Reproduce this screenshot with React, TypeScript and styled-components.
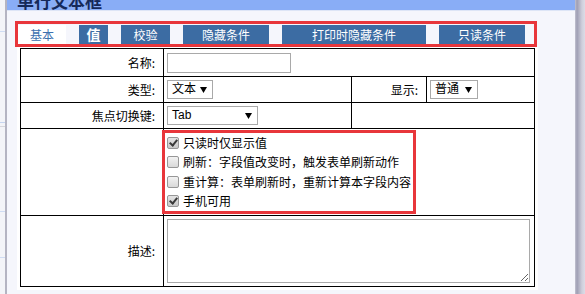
import React from "react";
import styled, { createGlobalStyle } from "styled-components";

const Global = createGlobalStyle`
  html, body {
    margin: 0;
    padding: 0;
    width: 585px;
    height: 294px;
    overflow: hidden;
    background: #f3f4f8;
  }
  body {
    font-family: "Liberation Sans", "Noto Sans CJK SC", sans-serif;
    font-size: 12px;
    color: #000;
  }
`;

const Screen = styled.div`
  display: flex;
  width: 585px;
  height: 294px;
  overflow: hidden;
`;

const Backdrop = styled.div`
  flex: none;
  width: 5px;
  background: linear-gradient(
    to bottom,
    #f3f4f8 0 31px,
    #cfdcf3 31px 32px,
    #f3f4f8 32px 122px,
    #c6d5f0 122px 123px,
    #f3f4f8 123px 126px,
    #d6d6dc 126px 127px,
    #f3f4f8 127px 211px,
    #cfdcf3 211px 212px,
    #f3f4f8 212px 257px,
    #cfdcf3 257px 258px,
    #f3f4f8 258px
  );
`;

const Dialog = styled.div`
  flex: none;
  width: 570px;
  box-sizing: border-box;
  border-left: 2px solid #b4b4c2;
  background: #f5f6fc;
  display: flex;
  flex-direction: column;
`;

const RightEdge = styled.div`
  flex: none;
  width: 10px;
  background: linear-gradient(
    90deg,
    #c2c2d0 0,
    #9e9eb4 2px,
    #a8a8bc 3px,
    #bcbccc 5px,
    #cfcfdc 7px,
    #dcdce6 10px
  );
`;

const TitleBar = styled.div`
  flex: none;
  height: 10px;
  overflow: hidden;
  background: #89adf6;
  border-bottom: 1px solid #dde5f6;
  padding-left: 10px;
`;

const Title = styled.div`
  margin-top: -8px;
  font-family: "Noto Sans CJK SC", sans-serif;
  font-size: 17px;
  line-height: 17px;
  font-weight: bold;
  color: #15295a;
`;

const Body = styled.div`
  padding: 10px 0 0 8px;
  display: flex;
  flex-direction: column;
`;

const TabBar = styled.div`
  box-sizing: border-box;
  width: 522px;
  height: 26px;
  border: 3px solid #e8363b;
  padding-top: 1px;
  display: flex;
  gap: 13px;
`;

const Tab = styled.div<{ $w: number; $active?: boolean; $big?: boolean }>`
  flex: none;
  width: ${(p) => p.$w}px;
  height: 19px;
  display: flex;
  align-items: center;
  justify-content: center;
  background: ${(p) => (p.$active ? "#ffffff" : "#3c6ca3")};
  color: ${(p) => (p.$active ? "#3d71b0" : "#ffffff")};
  font-family: "Noto Sans CJK SC", sans-serif;
  font-size: ${(p) => (p.$big ? 14 : 12)}px;
  font-weight: ${(p) => (p.$big ? "bold" : "normal")};
  line-height: 19px;
`;

const Panel = styled.div`
  margin-left: 2px;
  background: #fff;
  padding: 1px 3px 3px 3px;
  width: max-content;
`;

const FormGrid = styled.div`
  display: grid;
  grid-template-columns: 142px 187px 74px 107px;
  grid-template-rows: 27px 25px 25px 86px 70px;
  gap: 1px;
  padding: 1px;
  background: #000;
`;

const Cell = styled.div<{ $span?: number; $label?: boolean; $top?: boolean }>`
  grid-column: span ${(p) => p.$span ?? 1};
  background: #fff;
  display: flex;
  align-items: ${(p) => (p.$top ? "flex-start" : "center")};
  justify-content: ${(p) => (p.$label ? "flex-end" : "flex-start")};
  padding: ${(p) => (p.$label ? "0 8px 0 0" : "0 0 0 3px")};
  font-family: "Noto Sans CJK SC", sans-serif;
  font-size: 12px;
  line-height: 14px;
  min-width: 0;
`;

const TextInput = styled.input`
  box-sizing: border-box;
  width: 124px;
  height: 20px;
  border: 1px solid #a9a9a9;
  padding: 0 3px;
  margin: 0;
  background: #fff;
  outline: none;
`;

const SelectBox = styled.div<{ $w: number }>`
  box-sizing: border-box;
  width: ${(p) => p.$w}px;
  height: 19px;
  border: 1px solid #a9a9a9;
  background: #fff;
  display: flex;
  align-items: center;
  justify-content: space-between;
  padding: 0 5px 0 4px;
  font-family: "Liberation Sans", "Noto Sans CJK SC", sans-serif;
  font-size: 12px;
  line-height: 15px;
  color: #000;
`;

const Arrow = () => (
  <svg width="7" height="6" viewBox="0 0 7 6">
    <polygon points="0,0 7,0 3.5,6" fill="#000" />
  </svg>
);

const CheckGroup = styled.div`
  box-sizing: border-box;
  width: 254px;
  height: 84px;
  margin: 1px 0 0 -5px;
  border: 3px solid #e8363b;
  padding: 0 0 0 1px;
  display: flex;
  flex-direction: column;
`;

const CheckRow = styled.label`
  height: 19.5px;
  display: flex;
  align-items: center;
  font-family: "Noto Sans CJK SC", sans-serif;
  font-size: 12px;
  line-height: 14px;
  white-space: nowrap;
`;

const Check = styled.input.attrs({ type: "checkbox" })`
  appearance: none;
  position: relative;
  flex: none;
  width: 12px;
  height: 12px;
  margin: 0 4px 0 1px;
  box-sizing: border-box;
  border: 1px solid #979797;
  border-radius: 2px;
  background: linear-gradient(#f2f2f2, #d9d9d9);
  &:checked {
    background: linear-gradient(#e4e4e4, #c8c8c8);
  }
  &:checked::after {
    content: "";
    position: absolute;
    left: 3px;
    top: 0px;
    width: 3px;
    height: 6px;
    border: solid #3a3a3a;
    border-width: 0 2px 2px 0;
    transform: rotate(40deg);
  }
`;

const TextArea = styled.textarea`
  box-sizing: border-box;
  width: 363px;
  height: 64px;
  margin: 3px 0 0 0;
  border: 1px solid #a9a9a9;
  padding: 2px;
  background: #fff;
  outline: none;
`;

const tabs = [
  { label: "基本", w: 48, active: true },
  { label: "值", w: 29, big: true },
  { label: "校验", w: 49 },
  { label: "隐藏条件", w: 86 },
  { label: "打印时隐藏条件", w: 144 },
  { label: "只读条件", w: 86 },
];

const checks = [
  { label: "只读时仅显示值", checked: true },
  { label: "刷新：字段值改变时，触发表单刷新动作", checked: false },
  { label: "重计算：表单刷新时，重新计算本字段内容", checked: false },
  { label: "手机可用", checked: true },
];

export default function App() {
  return (
    <>
      <Global />
      <Screen>
        <Backdrop />
        <Dialog>
          <TitleBar>
            <Title>单行文本框</Title>
          </TitleBar>
          <Body>
            <TabBar>
              {tabs.map((t) => (
                <Tab key={t.label} $w={t.w} $active={t.active} $big={t.big}>
                  {t.label}
                </Tab>
              ))}
            </TabBar>
            <Panel>
              <FormGrid>
                <Cell $label>名称:</Cell>
                <Cell $span={3}>
                  <TextInput defaultValue="" />
                </Cell>

                <Cell $label>类型:</Cell>
                <Cell>
                  <SelectBox $w={46}>
                    <span>文本</span>
                    <Arrow />
                  </SelectBox>
                </Cell>
                <Cell $label>显示:</Cell>
                <Cell>
                  <SelectBox $w={48}>
                    <span>普通</span>
                    <Arrow />
                  </SelectBox>
                </Cell>

                <Cell $label>焦点切换键:</Cell>
                <Cell>
                  <SelectBox $w={91}>
                    <span>Tab</span>
                    <Arrow />
                  </SelectBox>
                </Cell>
                <Cell $span={2} />

                <Cell $label />
                <Cell $span={3} $top>
                  <CheckGroup>
                    {checks.map((c) => (
                      <CheckRow key={c.label}>
                        <Check defaultChecked={c.checked} />
                        {c.label}
                      </CheckRow>
                    ))}
                  </CheckGroup>
                </Cell>

                <Cell $label>描述:</Cell>
                <Cell $span={3} $top>
                  <TextArea />
                </Cell>
              </FormGrid>
            </Panel>
          </Body>
        </Dialog>
        <RightEdge />
      </Screen>
    </>
  );
}
